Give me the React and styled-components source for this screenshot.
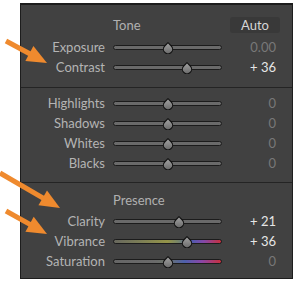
import styled, { createGlobalStyle } from 'styled-components'

const GlobalStyle = createGlobalStyle`
  html, body {
    margin: 0;
    background: #ffffff;
  }
  body {
    font-family: Lato, "Open Sans", "Liberation Sans", sans-serif;
  }
`

const Page = styled.div`
  position: relative;
  width: 300px;
  height: 286px;
  padding: 3px 0 0 20px;
  box-sizing: border-box;
`

const Panel = styled.div`
  width: 273px;
  height: 276px;
  box-sizing: border-box;
  background: #414141;
  border: 1px solid #1d1d1d;
  border-top-width: 2px;
  display: flex;
  flex-direction: column;
`

const Section = styled.div`
  padding: ${p => p.$pad};
  border-top: ${p => (p.$divided ? '1px solid #242424' : 'none')};
  flex: ${p => (p.$grow ? 1 : 'none')};
`

const Row = styled.div`
  display: grid;
  grid-template-columns: 84px 109px 1fr;
  column-gap: 8px;
  padding-right: 16px;
  height: 20px;
  align-items: center;
  font-size: 13px;
`

const HeaderRow = styled(Row)`
  margin-bottom: ${p => p.$gap || 0}px;
`

const Title = styled.div`
  grid-column: 2;
  color: #b0b0b0;
`

const AutoButton = styled.button`
  grid-column: 3;
  height: 16px;
  width: 50px;
  margin-right: -4px;
  justify-self: end;
  padding: 0;
  border: none;
  border-radius: 3px;
  background: #393939;
  color: #d6d6d6;
  font-family: inherit;
  font-size: 13px;
  line-height: 16px;
`

const Label = styled.div`
  text-align: right;
  color: #b4b4b4;
  white-space: nowrap;
`

const Value = styled.div`
  text-align: right;
  color: ${p => (p.$bright ? '#e6e6e6' : '#787878')};
  white-space: nowrap;
`

const SliderBox = styled.div`
  position: relative;
  height: 12px;
  display: flex;
  align-items: center;
`

const Track = styled.div`
  width: 100%;
  height: 5px;
  box-sizing: border-box;
  border: 1px solid #1c1c1c;
  border-radius: 2.5px;
  background: ${p => p.$fill || '#6a6a6a'};
`

const ThumbSvg = styled.svg`
  position: absolute;
  top: 1px;
  margin-left: -6px;
`

const Overlay = styled.svg`
  position: absolute;
  top: 0;
  left: 0;
  pointer-events: none;
`

const vibranceFill =
  'linear-gradient(90deg, #68685e 0%, #7c7e56 25%, #949448 50%, #76846a 60%, #4c5cae 72%, #8448a8 84%, #c8303e 100%)'
const saturationFill =
  'linear-gradient(90deg, #666666 0%, #6a6a6a 38%, #6c746a 50%, #4e60ac 66%, #8a46a6 82%, #c8303e 100%)'

const Thumb = ({ pos }) => (
  <ThumbSvg width="12" height="12" viewBox="0 0 12 12" style={{ left: `${pos}%` }}>
    <defs>
      <linearGradient id="thumbGrad" x1="0" y1="0" x2="0" y2="1">
        <stop offset="0" stopColor="#a4a4a4" />
        <stop offset="1" stopColor="#6a6a6a" />
      </linearGradient>
    </defs>
    <path
      d="M6 0.6 L9.3 4 A4.6 4.6 0 1 1 2.7 4 Z"
      fill="url(#thumbGrad)"
      stroke="#121212"
      strokeWidth="1.1"
    />
  </ThumbSvg>
)

const SliderRow = ({ label, value, text, bright, fill }) => (
  <Row>
    <Label>{label}</Label>
    <SliderBox>
      <Track $fill={fill} />
      <Thumb pos={50 + value / 2} />
    </SliderBox>
    <Value $bright={bright}>{text}</Value>
  </Row>
)

const Arrow = ({ x1, y1, x2, y2 }) => {
  const dx = x2 - x1
  const dy = y2 - y1
  const len = Math.hypot(dx, dy)
  const ux = dx / len
  const uy = dy / len
  const hl = 20
  const hw = 8.5
  const bx = x2 - ux * hl
  const by = y2 - uy * hl
  const pts = [
    [x2, y2],
    [bx - uy * hw, by + ux * hw],
    [bx + uy * hw, by - ux * hw],
  ]
  return (
    <g fill="#ef8a2e" stroke="#ef8a2e">
      <line x1={x1} y1={y1} x2={bx + ux * 3} y2={by + uy * 3} strokeWidth="5" />
      <polygon points={pts.map(p => p.join(',')).join(' ')} stroke="none" />
    </g>
  )
}

export default function App() {
  return (
    <>
      <GlobalStyle />
      <Page>
        <Panel>
          <Section $pad="10px 0 10px">
            <HeaderRow $gap={2}>
              <Title>Tone</Title>
              <AutoButton>Auto</AutoButton>
            </HeaderRow>
            <SliderRow label="Exposure" value={0} text="0.00" />
            <SliderRow label="Contrast" value={36} text="+ 36" bright />
          </Section>
          <Section $divided $pad="5px 0 9px">
            <SliderRow label="Highlights" value={0} text="0" />
            <SliderRow label="Shadows" value={0} text="0" />
            <SliderRow label="Whites" value={0} text="0" />
            <SliderRow label="Blacks" value={0} text="0" />
          </Section>
          <Section $divided $grow $pad="7px 0 0">
            <HeaderRow $gap={1}>
              <Title>Presence</Title>
            </HeaderRow>
            <SliderRow label="Clarity" value={21} text="+ 21" bright />
            <SliderRow label="Vibrance" value={36} text="+ 36" bright fill={vibranceFill} />
            <SliderRow label="Saturation" value={0} text="0" fill={saturationFill} />
          </Section>
        </Panel>
        <Overlay width="300" height="286" viewBox="0 0 300 286">
          <Arrow x1={6} y1={41} x2={47} y2={63} />
          <Arrow x1={0} y1={173} x2={60} y2={208} />
          <Arrow x1={6} y1={211} x2={47} y2={234} />
        </Overlay>
      </Page>
    </>
  )
}
